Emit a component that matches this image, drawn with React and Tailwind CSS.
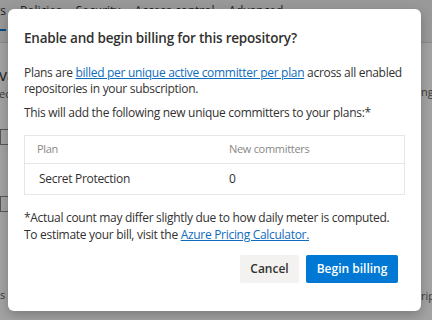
export default function App() {
  return (
    <div className="relative w-[432px] h-[320px] overflow-hidden bg-white text-[#323130]" style={{ fontFamily: '"Open Sans", "Noto Sans", sans-serif' }}>
      {/* page behind the dialog */}
      <div className="flex flex-col h-full">
        <div className="h-[43px] bg-[#f0f0f0] border-b border-[#d8d8d8] flex flex-col">
          <div className="flex gap-[14px] pt-[3px] text-[12px] leading-[16px] text-[#323130] whitespace-nowrap">
            <span className="w-[6px] overflow-hidden flex justify-end">
              <span>Settings</span>
            </span>
            <span>Policies</span>
            <span>Security</span>
            <span>Access control</span>
            <span>Advanced</span>
          </div>
          <span className="mt-[10px] h-[2px] w-[6px] bg-[#0078d4]"></span>
        </div>
        <div className="flex-1 flex justify-between">
          <div className="w-[8px] overflow-hidden flex flex-col">
            <span className="text-[16px] leading-[20px] mt-[22px] -ml-[1px] whitespace-nowrap">va</span>
            <span className="text-[11px] leading-[14px] mt-[2px] -ml-[1px] text-[#605e5c] whitespace-nowrap">ec</span>
            <div className="mt-[28px] h-[16px] w-[20px] border border-[#8a8886]"></div>
            <div className="mt-[51px] h-[16px] w-[20px] border border-[#8a8886]"></div>
            <span className="text-[11px] leading-[14px] mt-[76px] text-[#605e5c] whitespace-nowrap">s a</span>
          </div>
          <div className="w-[11px] overflow-hidden flex flex-col">
            <span className="text-[11px] leading-[14px] mt-[42px] text-[#605e5c] whitespace-nowrap">ng</span>
            <span className="text-[11px] leading-[14px] mt-[190px] text-[#605e5c] whitespace-nowrap">rip</span>
          </div>
        </div>
      </div>

      {/* overlay */}
      <div className="absolute inset-0 bg-black/[0.36]"></div>

      {/* dialog */}
      <div className="absolute left-[8px] top-[9px] w-[413px] h-[302px] rounded-[6px] bg-white shadow-[0_4px_12px_rgba(0,0,0,0.25)] px-4 flex flex-col tracking-[-0.3px]">
        <h2 className="pt-[19px] text-[13.5px] leading-[20px] font-semibold tracking-[-0.2px]">Enable and begin billing for this repository?</h2>
        <p className="mt-[17px] text-[12px] leading-[16px]">
          Plans are <a className="text-[#0f6cbd] underline">billed per unique active committer per plan</a> across all enabled repositories in your subscription.
        </p>
        <p className="mt-2 text-[12px] leading-[16px]">This will add the following new unique committers to your plans:*</p>
        <div className="mt-[14px] border border-[#e6e6e6] text-[12px]">
          <div className="flex h-[28px] items-center border-b border-[#e6e6e6] text-[11px] text-[#8a8886]">
            <span className="w-[204px] pl-[12px]">Plan</span>
            <span>New committers</span>
          </div>
          <div className="flex h-[30px] items-center">
            <span className="w-[204px] pl-[14px]">Secret Protection</span>
            <span>0</span>
          </div>
        </div>
        <p className="mt-[14px] text-[12px] leading-[17px]">
          *Actual count may differ slightly due to how daily meter is computed.<br />
          To estimate your bill, visit the <a className="text-[#0f6cbd] underline">Azure Pricing Calculator.</a>
        </p>
        <div className="mt-[12px] flex justify-end gap-[7px] pr-[7px] tracking-normal">
          <button className="h-[28px] w-[59px] bg-[#f3f2f1] text-[12px] font-semibold rounded-[2px]">Cancel</button>
          <button className="h-[28px] w-[92px] bg-[#0078d4] text-white text-[12px] font-semibold rounded-[2px]">Begin billing</button>
        </div>
      </div>
    </div>
  );
}
